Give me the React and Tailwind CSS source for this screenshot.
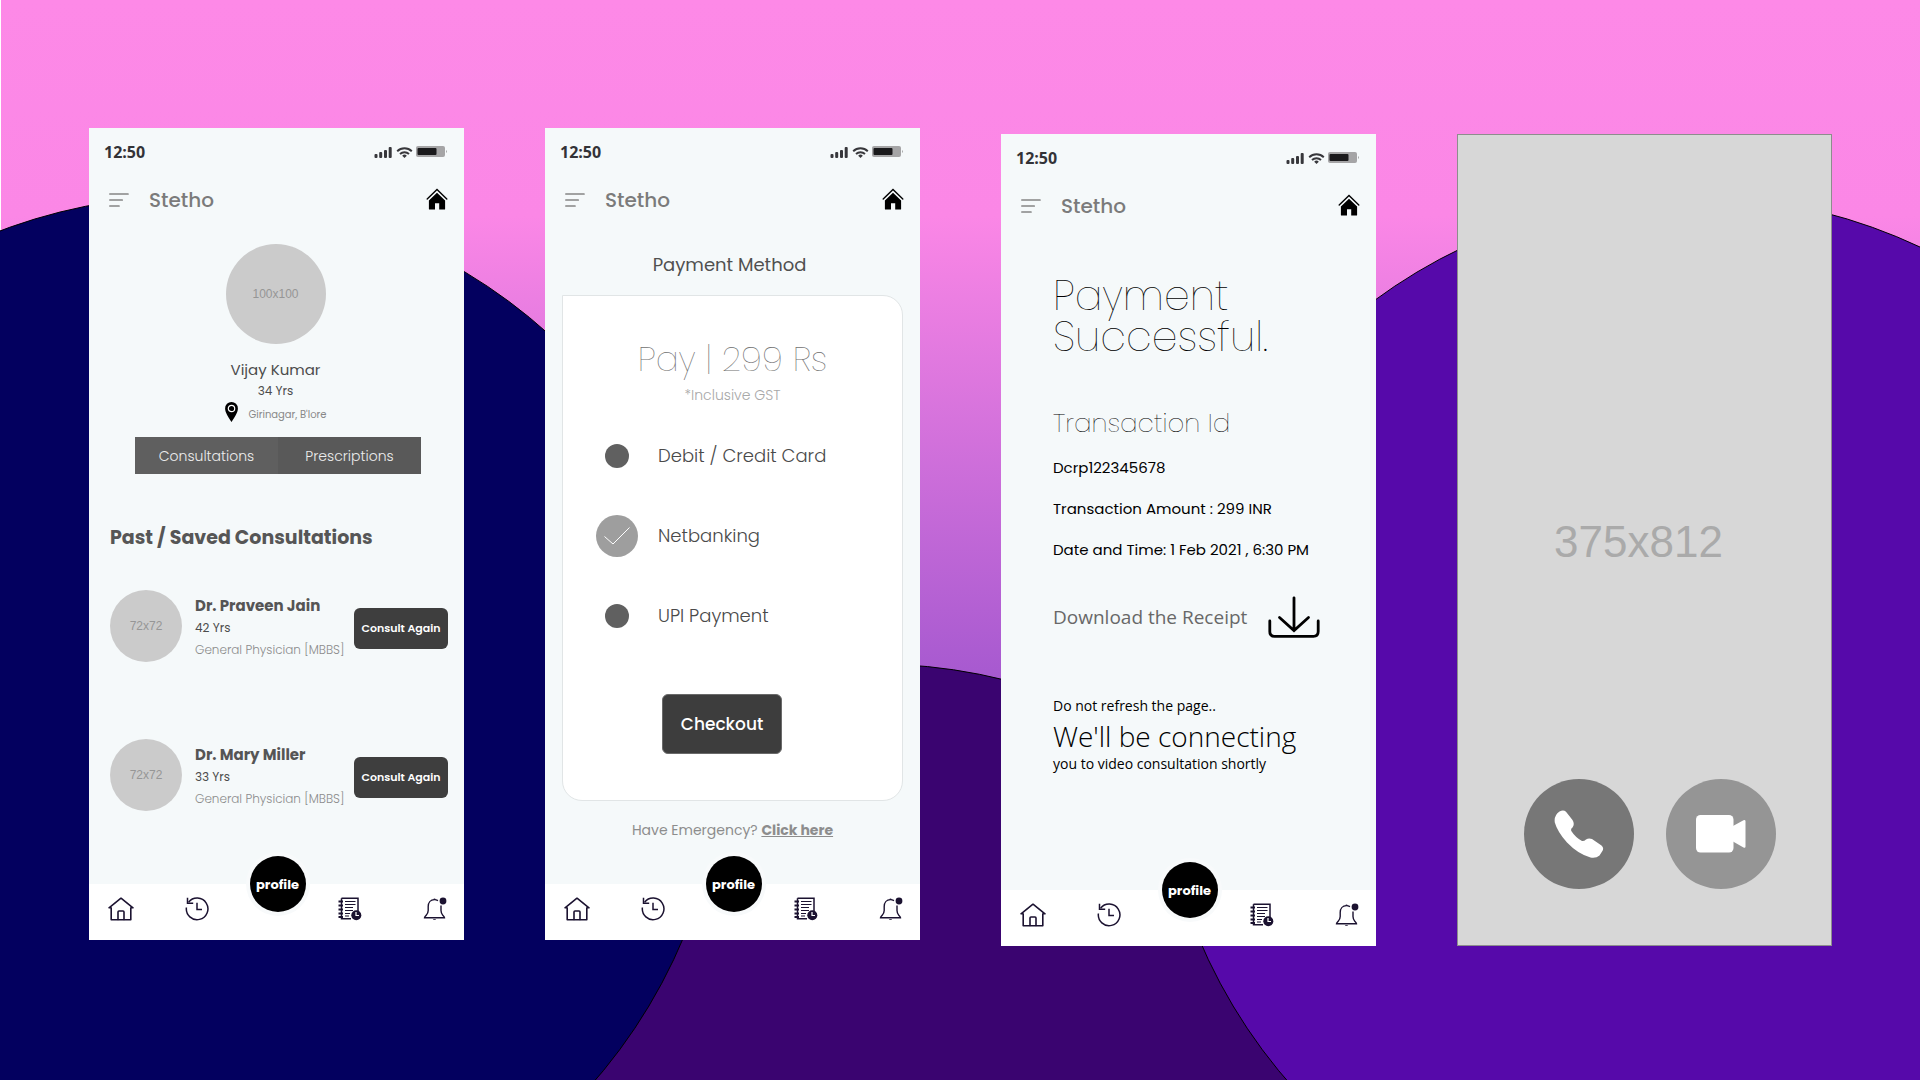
const POPPINS = "font-[Poppins,Inter,sans-serif]";

function Backdrop() {
  return (
    <svg
      className="absolute inset-0 h-full w-full"
      viewBox="0 0 1920 1080"
      preserveAspectRatio="xMidYMid slice"
      aria-hidden="true"
    >
      <defs>
        <linearGradient id="sky" x1="0" y1="0" x2="0" y2="1080" gradientUnits="userSpaceOnUse">
          <stop offset="0" stopColor="#fd89e7" />
          <stop offset="0.2" stopColor="#fb87e6" />
          <stop offset="0.62" stopColor="#a85ad0" />
          <stop offset="1" stopColor="#5a30b0" />
        </linearGradient>
      </defs>
      <rect width="1920" height="1080" fill="url(#sky)" />
      <rect width="1" height="230" fill="#fff" />
      <circle cx="875" cy="1199" r="535" fill="#3a0470" stroke="#000" />
      <circle cx="190" cy="731" r="535" fill="#03005f" stroke="#000" />
      <circle cx="1692" cy="731" r="535" fill="#5609aa" stroke="#000" />
    </svg>
  );
}

function StatusIcons() {
  return (
    <svg width="74" height="14" viewBox="0 0 74 14" aria-hidden="true">
      <g fill="#37373b">
        <rect x="0.5" y="9" width="3" height="4" rx="1" />
        <rect x="5.2" y="7" width="3" height="6" rx="1" />
        <rect x="10" y="5" width="3" height="8" rx="1" />
        <rect x="14.7" y="2" width="3" height="11" rx="1" />
      </g>
      <g fill="none" stroke="#37373b" strokeWidth="1.9">
        <path d="M23.2 6.2a10.4 10.4 0 0 1 14.6 0" />
        <path d="M26 9a6.600 6.600 0 0 1 9 0" />
      </g>
      <path d="M30.500 13l-2.300-2.300a3.300 3.300 0 0 1 4.600 0z" fill="#37373b" />
      <rect x="42" y="1" width="29" height="11" rx="2" fill="#a5a5a6" />
      <rect x="43.500" y="3" width="19" height="7" rx="1" fill="#1a1a1c" />
      <path d="M72 5q2 1.500 0 3z" fill="#a5a5a6" />
    </svg>
  );
}

function SolidHome() {
  return (
    <svg width="22" height="22" viewBox="0 0 22 22" aria-hidden="true">
      <path d="M1.200 11 11 1.400 20.800 11" fill="none" stroke="#000" strokeWidth="1.400" strokeLinecap="round" />
      <path d="M2.900 12.600 11 4.800 19.100 12.600V21q0 .6-.6.6H13.200V15.200H9v6.400H3.500q-.6 0-.6-.6z" fill="#000" />
    </svg>
  );
}

function Header() {
  return (
    <header>
      <div className="flex h-12 items-center justify-between pr-4 pl-[15px]">
        <span className="font-['Open_Sans',sans-serif] text-base font-bold text-[#333337]">12:50</span>
        <StatusIcons />
      </div>
      <div className="flex h-12 items-center pr-4 pl-5">
        <button type="button" aria-label="Menu">
          <svg width="20" height="16" viewBox="0 0 20 16" aria-hidden="true">
            <path d="M.8 2H19M.8 8H13.200M.8 14H10" stroke="#858585" strokeWidth="1.700" strokeLinecap="round" />
          </svg>
        </button>
        <span className="ml-5 text-xl font-medium text-[#7b7b7b]">Stetho</span>
        <a href="#home" aria-label="Home" className="ml-auto pb-0.5">
          <SolidHome />
        </a>
      </div>
    </header>
  );
}

function NavHome() {
  return (
    <svg width="26" height="24" viewBox="0 0 26 24" fill="none" stroke="#1b1230" strokeWidth="1.600" strokeLinejoin="round" strokeLinecap="round" aria-hidden="true">
      <path d="M3.200 10.800H1L13 1.200 25 10.800H22.800V22.800H3.200z" />
      <path d="M10 22.500V15q0-1 1-1h4q1 0 1 1v7.500" />
    </svg>
  );
}

function NavHistory() {
  return (
    <svg width="24" height="24" viewBox="0 0 24 24" fill="none" stroke="#1b1230" strokeWidth="1.500" aria-hidden="true">
      <path d="M1.400 10.500A10.800 10.800 0 1 0 3.600 5.200" />
      <path d="M2.500.8V6.200H8.200" />
      <path d="M12 5.800V12.600H17" />
    </svg>
  );
}

function NavNotes() {
  return (
    <svg width="24" height="24" viewBox="0 0 24 24" aria-hidden="true">
      <path d="M3.500 1.200H20V14M3.500 1.200V21.800H13" fill="none" stroke="#1b1230" strokeWidth="1.500" />
      <path d="M7 4.500H17.500M7 7.500H17.500M7 10.500H15M7 13.500H15M7 16.500H12M7 19H11" stroke="#1b1230" strokeWidth="1.200" />
      <path d="M.5 4.500H5M.5 8.500H5M.5 12.500H5M.5 16.500H5M.5 20H5" stroke="#1b1230" strokeWidth="2" />
      <circle cx="18.300" cy="18.300" r="5" fill="#1b1230" />
      <path d="M18 15V18.500H21" fill="none" stroke="#fff" strokeWidth="1.200" />
    </svg>
  );
}

function NavBell() {
  return (
    <svg width="24" height="24" viewBox="0 0 24 24" aria-hidden="true">
      <path d="M15 3.600Q13 2.600 11.500 2.600C7.500 2.600 5.200 5.600 5.200 9.500V13.500Q5.200 16 3.200 18.200Q1.500 20 1.500 20.800H21.500Q21.500 19.800 19.800 18.200Q18 16 18 13.500V8.500" fill="none" stroke="#1b1230" strokeWidth="1.400" />
      <path d="M10 2.400Q11.500.4 13 2.400z" fill="#1b1230" />
      <path d="M9.800 22.200H13.200Q11.500 24 9.800 22.200z" fill="#1b1230" />
      <circle cx="20" cy="4" r="3.400" fill="#1b1230" />
    </svg>
  );
}

function BottomNav() {
  return (
    <nav className="mt-auto flex h-14 items-center bg-white">
      <div className="flex flex-1 items-center gap-[51px] pb-1.5 pl-[19px]">
        <a href="#home" aria-label="Home"><NavHome /></a>
        <a href="#history" aria-label="History"><NavHistory /></a>
      </div>
      <a
        href="#profile"
        className="-mt-7 flex size-14 items-center justify-center self-start rounded-full bg-black pt-0.5 text-[13px] font-bold text-white ring-4 ring-[#f8fafb]"
      >
        profile
      </a>
      <div className="flex flex-1 items-center justify-end gap-[61px] pr-[17px] pb-1.5">
        <a href="#notes" aria-label="Records"><NavNotes /></a>
        <a href="#alerts" aria-label="Notifications"><NavBell /></a>
      </div>
    </nav>
  );
}

function Phone({ className = "", children }) {
  return (
    <section className={`flex min-h-[812px] flex-col bg-[#f5f9fa] ${POPPINS} ${className}`}>
      <Header />
      {children}
      <BottomNav />
    </section>
  );
}

const doctors = [
  { name: "Dr. Praveen Jain", age: "42 Yrs" },
  { name: "Dr. Mary Miller", age: "33 Yrs" },
];

function ProfileScreen() {
  return (
    <Phone>
      <div className="flex flex-col items-center pt-5 pr-0.5">
        <div className="flex size-[100px] items-center justify-center rounded-full bg-[#cbcbcb] font-['Liberation_Sans_Narrow','Liberation_Sans',sans-serif] text-xs text-[#969696]">
          100x100
        </div>
        <h2 className="mt-[14px] text-[15px] leading-6 text-[#4c4c4c]">Vijay Kumar</h2>
        <p className="text-xs leading-[18px] text-[#4c4c4c]">34 Yrs</p>
        <p className="mt-0.5 flex gap-[11px] text-[10px] leading-5 text-[#888]">
          <svg width="13" height="20" viewBox="0 0 13 20" aria-hidden="true">
            <path d="M6.500 0A6.400 6.400 0 0 0 .1 6.400C.1 10.500 3.500 15 6.500 20 9.500 15 12.900 10.500 12.900 6.400A6.400 6.400 0 0 0 6.500 0z" fill="#000" />
            <circle cx="6.500" cy="6.500" r="3.200" fill="none" stroke="#fff" strokeWidth="1.200" />
          </svg>
          <span className="pt-[3px]">Girinagar, B'lore</span>
        </p>
      </div>
      <div className="mt-3 mr-[43px] ml-[46px] grid grid-cols-2 text-sm font-light text-[#ececec]">
        <button type="button" className="h-[37px] bg-[#5f5f5f]">Consultations</button>
        <button type="button" className="h-[37px] bg-[#595959]">Prescriptions</button>
      </div>
      <h3 className="mt-[50px] pl-[21px] text-[19px] leading-7 font-bold text-[#565656]">Past / Saved Consultations</h3>
      <ul className="mt-[38px] flex flex-col gap-[77px] pr-4 pl-[21px]">
        {doctors.map((d) => (
          <li key={d.name} className="flex items-center">
            <div className="flex size-[72px] shrink-0 items-center justify-center rounded-full bg-[#cbcbcb] font-['Liberation_Sans_Narrow','Liberation_Sans',sans-serif] text-xs text-[#969696]">
              72x72
            </div>
            <div className="ml-[13px] pt-0.5 whitespace-nowrap">
              <h4 className="text-[15px] leading-[23px] font-bold text-[#555]">{d.name}</h4>
              <p className="text-xs leading-[22px] text-[#4c4c4c]">{d.age}</p>
              <p className="text-xs leading-[22px] font-light text-[#8c8c8c]">General Physician [MBBS]</p>
            </div>
            <button type="button" className="mt-1 ml-auto h-[41px] w-[94px] rounded-md bg-[#3e3e3e] text-[11px] font-semibold whitespace-nowrap text-white">
              Consult Again
            </button>
          </li>
        ))}
      </ul>
    </Phone>
  );
}

const methods = ["Debit / Credit Card", "Netbanking", "UPI Payment"];

function PaymentScreen() {
  return (
    <Phone>
      <h2 className="pt-[27px] pr-1.5 text-center text-lg leading-7 text-[#505050]">Payment Method</h2>
      <form className="mx-[17px] mt-4 rounded-[20px] rounded-tl-none border border-[#e1e5e6] bg-white pt-10 pb-[46px]">
        <p className="text-center text-[34px] leading-[46px] font-extralight text-[#6f6f6f]">Pay | 299 Rs</p>
        <p className="mt-[3px] text-center text-sm leading-5 font-light text-[#a8a8a8]">*Inclusive GST</p>
        <fieldset className="mt-[11px] pl-[33px]">
          {methods.map((m) => (
            <label key={m} className="flex h-20 items-center text-lg font-light text-[#4a4a4a]">
              <input type="radio" name="method" defaultChecked={m === "Netbanking"} className="peer sr-only" />
              <span className="flex w-[42px] items-center justify-center peer-checked:[&_svg]:block peer-checked:[&>i]:size-[42px] peer-checked:[&>i]:bg-[#9e9e9e]">
                <i className="flex size-6 items-center justify-center rounded-full bg-[#606060]">
                  <svg width="26" height="18" viewBox="0 0 26 18" className="hidden" aria-hidden="true">
                    <path d="M.5 9.500 9 17 25.500.5" fill="none" stroke="#fff" />
                  </svg>
                </i>
              </span>
              <span className="ml-5">{m}</span>
            </label>
          ))}
        </fieldset>
        <button type="button" className="mt-[38px] ml-[99px] h-[60px] w-[120px] rounded-md border border-[#6a6a6a] bg-[#3d3d3d] pt-0.5 text-[17px] font-medium text-white">
          Checkout
        </button>
      </form>
      <p className="mt-[19px] text-center text-sm leading-5 text-[#8d8d8d]">
        Have Emergency? <a href="#emergency" className="font-bold underline">Click here</a>
      </p>
    </Phone>
  );
}

function SuccessScreen() {
  return (
    <Phone className="mt-[6px]">
      <div className="pt-[45px] pl-[52px] text-black">
        <h2 className="text-[41px] leading-[41px] font-extralight">
          Payment
          <br />
          Successful.
        </h2>
        <h3 className="mt-12 text-[26px] leading-9 font-extralight">Transaction Id</h3>
        <div className="mt-[6px] text-[15px] leading-[41px]">
          <p>Dcrp122345678</p>
          <p>Transaction Amount : 299 INR</p>
          <p>Date and Time: 1 Feb 2021 , 6:30 PM</p>
        </div>
        <div className="font-['Open_Sans',sans-serif]">
          <button type="button" className="mt-[26px] flex items-center gap-[21px] text-[19px] text-[#686868]">
            Download the Receipt
            <svg width="52" height="42" viewBox="0 0 52 42" fill="none" stroke="#000" strokeWidth="2.800" strokeLinecap="round" aria-hidden="true">
              <path d="M26 1.800V34M11.500 21.500 26 34.500 40.500 21.500" />
              <path d="M1.800 25V35.500Q1.800 40.300 6.600 40.300H45.400Q50.200 40.300 50.200 35.500V25" />
            </svg>
          </button>
          <p className="mt-14 text-sm leading-6">Do not refresh the page..</p>
          <p className="text-[28px] leading-9 font-light">We'll be connecting</p>
          <p className="text-sm leading-5">you to video consultation shortly</p>
        </div>
      </div>
    </Phone>
  );
}

function CallScreen() {
  return (
    <section className="mt-[6px] flex min-h-[812px] flex-col items-center border border-[#8d8d8d] bg-[#d7d7d7] pb-14">
      <p className="flex flex-1 items-center pt-[170px] pr-3 font-['Liberation_Sans_Narrow','Liberation_Sans',sans-serif] text-[44px] text-[#aaa]">375x812</p>
      <div className="flex gap-8 pl-[11px]">
        <button type="button" aria-label="Voice call" className="flex size-[110px] items-center justify-center rounded-full bg-[#777]">
          <svg width="50" height="48" viewBox="0 0 50 48" fill="#fff" aria-hidden="true">
            <path d="M5.500 1.500Q9.500-.8 12 1.800L18.500 10Q21 14 18.500 17.500Q16.500 18.800 17.300 21Q21.500 27.500 28 31Q30 31.400 32 29.500Q34.500 28 38 29L47.500 35.500Q50 37.500 48.700 40.500L45.500 45.500Q42 48.500 36.500 47.500Q24 44 13 32.500Q3.500 22 .8 12.500Q-.3 5.500 5.500 1.500z" />
          </svg>
        </button>
        <button type="button" aria-label="Video call" className="flex size-[110px] items-center justify-center rounded-full bg-[#959595]">
          <svg width="50" height="38" viewBox="0 0 50 38" fill="#fff" aria-hidden="true">
            <rect x="0" y="0" width="37.500" height="37.500" rx="4.500" />
            <path d="M37 11 47.500 5.300Q49.500 4.500 49.500 6.500V31.500Q49.500 33.500 47.500 32.500L37 26.500z" />
          </svg>
        </button>
      </div>
    </section>
  );
}

export default function App() {
  return (
    <div className="relative min-h-screen overflow-hidden">
      <Backdrop />
      <main className="relative grid grid-cols-4 items-start gap-[81px] pt-32 pr-[88px] pb-32 pl-[89px]">
        <ProfileScreen />
        <PaymentScreen />
        <SuccessScreen />
        <CallScreen />
      </main>
    </div>
  );
}
